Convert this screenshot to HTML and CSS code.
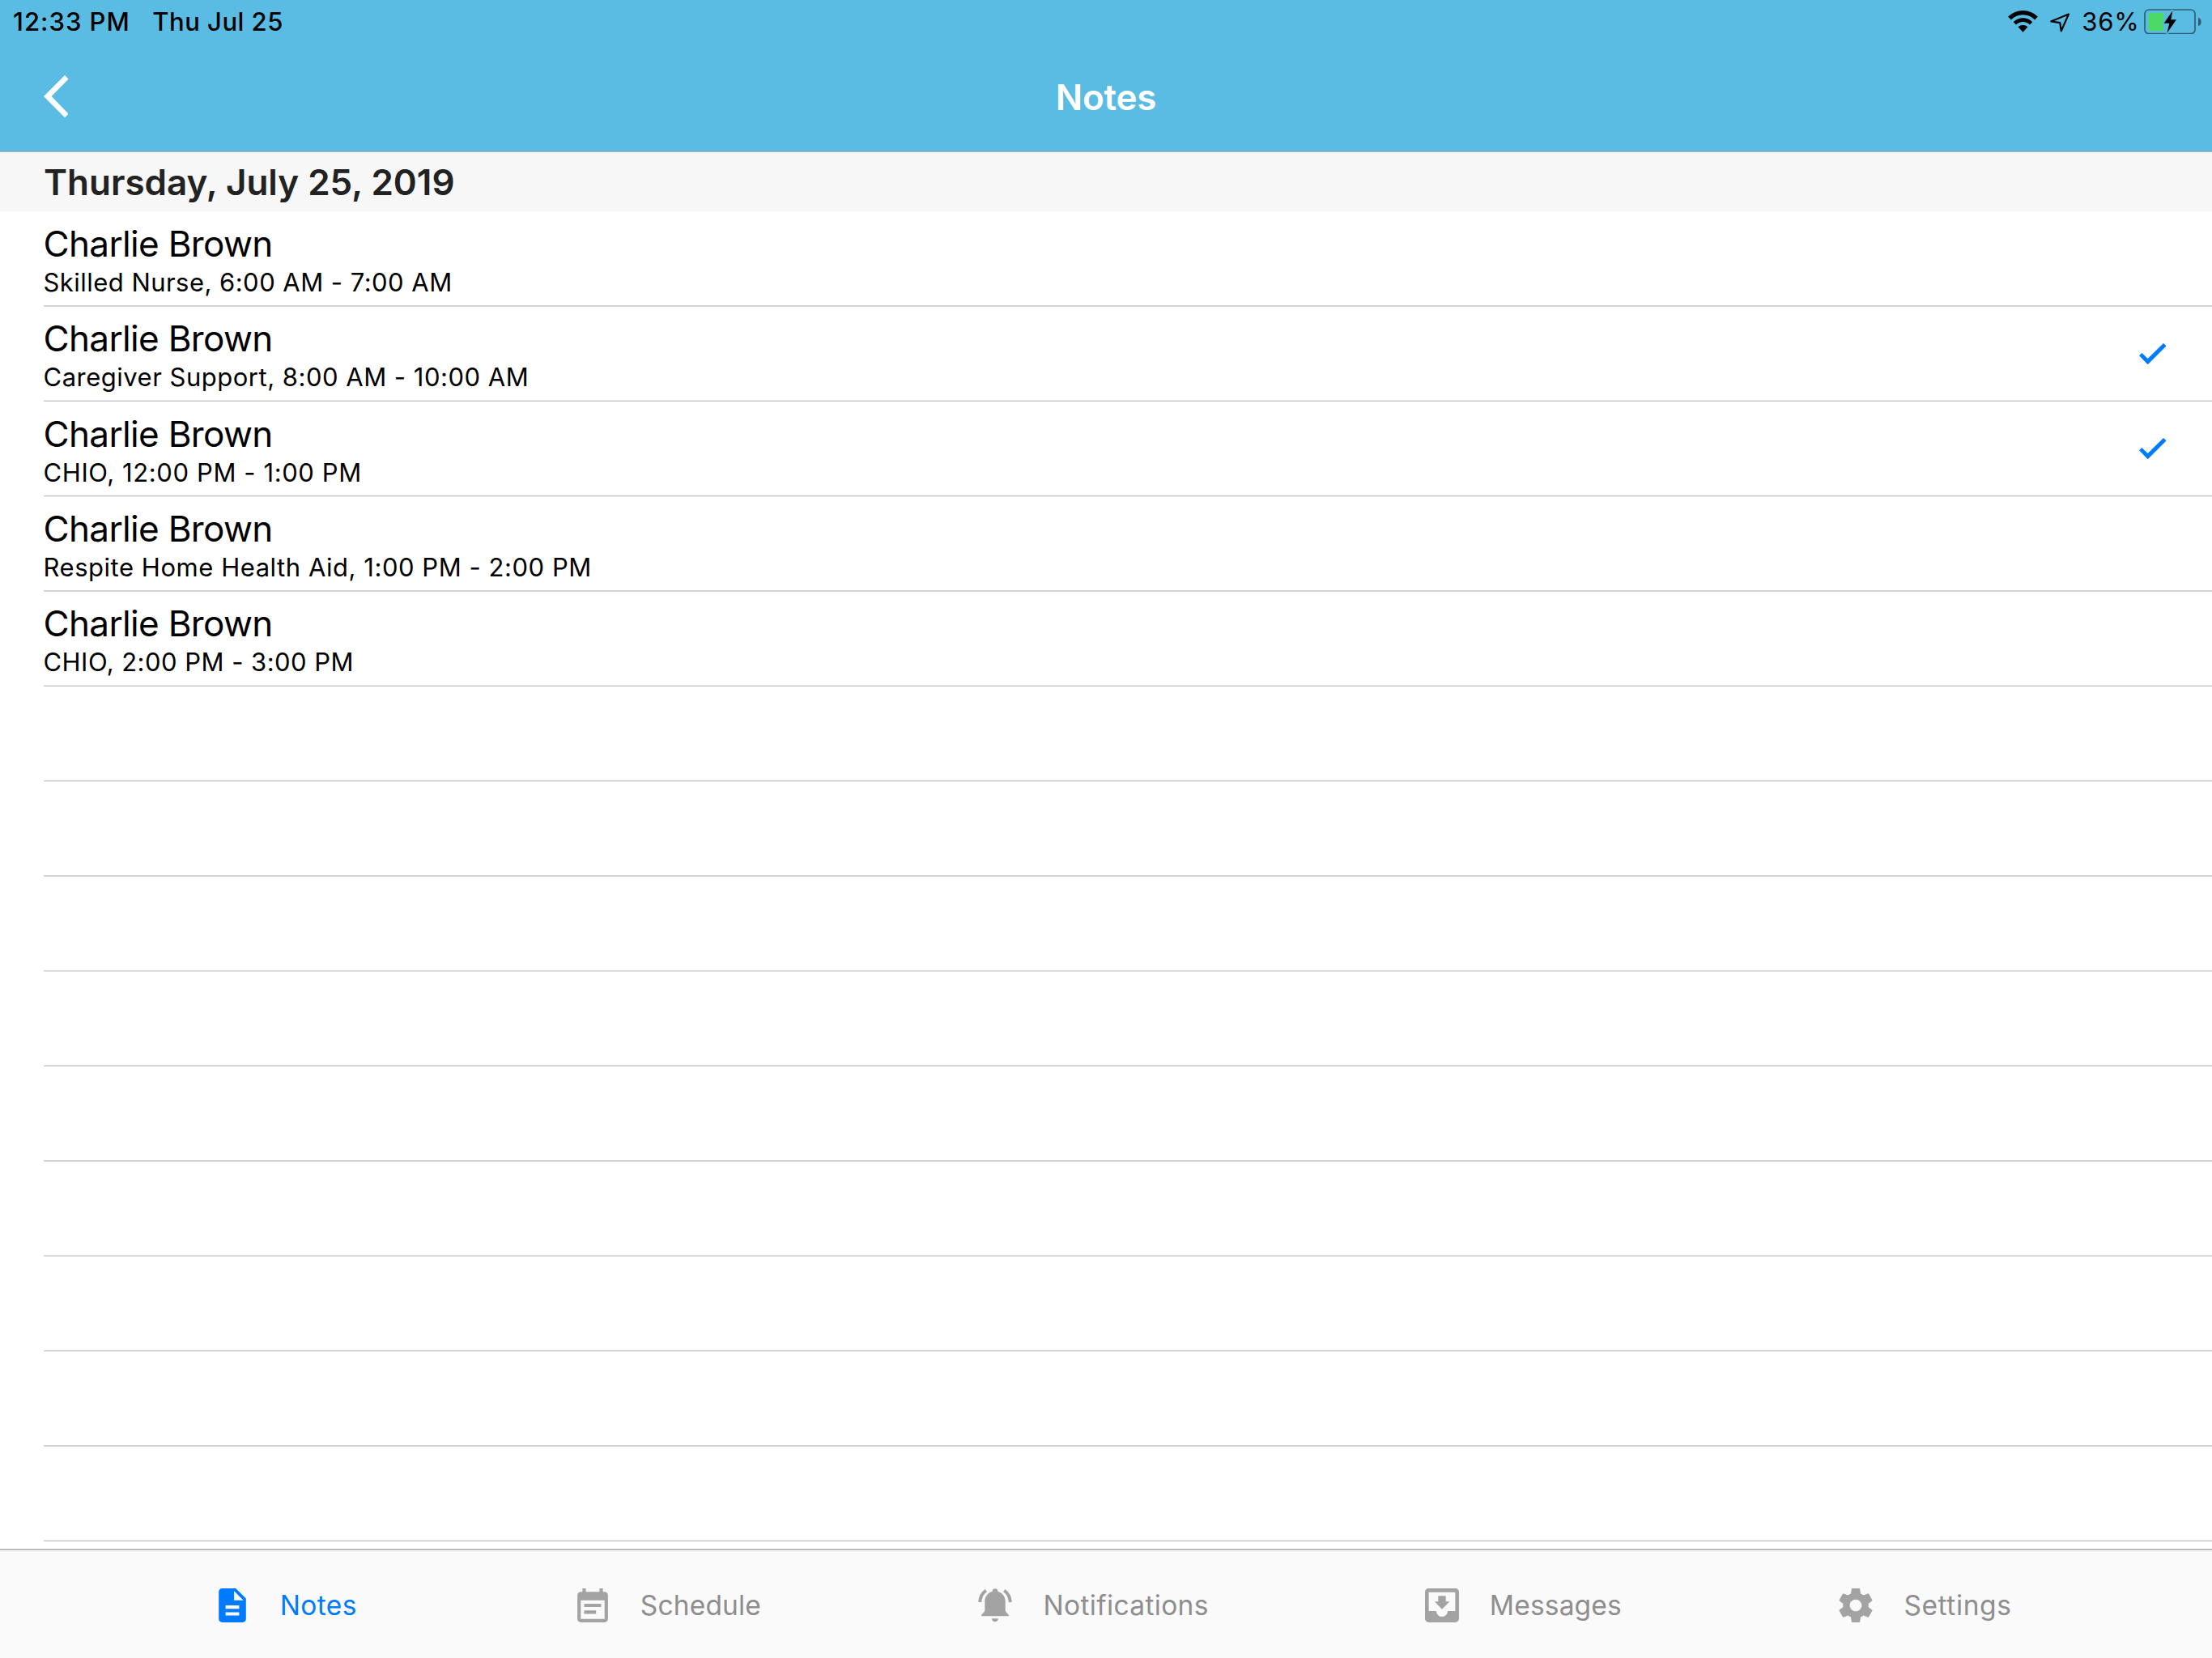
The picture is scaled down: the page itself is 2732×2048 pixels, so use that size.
FILE: index.html
```html
<!DOCTYPE html>
<html lang="en">
<head>
<meta charset="utf-8">
<title>Notes</title>
<link rel="stylesheet" href="styles.css">
</head>
<body>
<div class="app">
  <header class="header">
    <div class="status">
      <span class="status-time">12:33 PM</span>
      <span class="status-date">Thu Jul 25</span>
      <div class="status-right">
        <svg class="wifi" viewBox="12 27 111 80" fill="none" stroke="#000">
          <path d="M18 55.5a70 70 0 0 1 99 0" stroke-width="16"/>
          <path d="M37.1 74.6a43 43 0 0 1 60.8 0" stroke-width="14"/>
          <path d="M67.5 107L49.5 88a26 26 0 0 1 36 0z" fill="#000" stroke="none"/>
        </svg>
        <svg class="location" viewBox="168 36 73 72" fill="none" stroke="#000" stroke-width="6.5" stroke-linejoin="round">
          <path d="M172 67L236.500 40.500L209 103L204.500 72.500z"/>
        </svg>
        <span class="battery-label">36%</span>
        <svg class="battery" viewBox="18 20 213 95">
          <rect x="21" y="23" width="186" height="89" rx="15" fill="none" stroke="#000" stroke-opacity=".5" stroke-width="5"/>
          <path d="M219 52c7 2 11 8 11 16s-4 14-11 16z" fill="#000" fill-opacity=".5"/>
          <rect x="34" y="35" width="57" height="66" rx="7" fill="#4cd964"/>
          <path class="bolt-gap" d="M124 25L91 73h19l-8 38 37-51h-20z"/>
          <path d="M124 27L92 73h20l-9 37 35-50h-20z"/>
        </svg>
      </div>
    </div>
    <div class="navbar">
      <svg class="back" viewBox="0 0 30.6 52.3" fill="#fff"><path d="M26 0L30.600 4.600L9.600 26.100L30.600 47.700L26 52.300L0 26.100z"/></svg>
      <h1 class="title">Notes</h1>
    </div>
  </header>
  <main class="content">
    <h2 class="section">Thursday, July 25, 2019</h2>
    <ul class="list">
      <li class="row"><div><div class="name">Charlie Brown</div><div class="detail nurse">Skilled Nurse, 6:00 AM - 7:00 AM</div></div></li>
      <li class="row"><div><div class="name">Charlie Brown</div><div class="detail">Caregiver Support, 8:00 AM - 10:00 AM</div></div><svg class="check" viewBox="0 0 101 79"><path d="M0 46L10 36L32 57L90 0L101 10L32 79z"/></svg></li>
      <li class="row"><div><div class="name">Charlie Brown</div><div class="detail chio">CHIO, 12:00 PM - 1:00 PM</div></div><svg class="check" viewBox="0 0 101 79"><path d="M0 46L10 36L32 57L90 0L101 10L32 79z"/></svg></li>
      <li class="row"><div><div class="name">Charlie Brown</div><div class="detail respite">Respite Home Health Aid, 1:00 PM - 2:00 PM</div></div></li>
      <li class="row"><div><div class="name">Charlie Brown</div><div class="detail nurse">CHIO, 2:00 PM - 3:00 PM</div></div></li>
      <li class="row"></li>
      <li class="row"></li>
      <li class="row"></li>
      <li class="row"></li>
      <li class="row"></li>
      <li class="row"></li>
      <li class="row"></li>
      <li class="row"></li>
      <li class="row"></li>
    </ul>
  </main>
  <nav class="tabs">
    <a class="tab active">
      <svg class="icon" viewBox="2 2 20 20"><path d="M14 2H6c-1.100 0-1.990.9-1.990 2L4 20c0 1.100.89 2 1.990 2H18c1.100 0 2-.9 2-2V8l-6-6zm2 16H8v-2h8v2zm0-4H8v-2h8v2zm-3-5V3.500L18.500 9H13z"/></svg>
      <span class="label-notes">Notes</span>
    </a>
    <a class="tab schedule">
      <svg class="icon" viewBox="2 1 20 20"><path d="M17 10H7v2h10v-2zm2-7h-1V1h-2v2H8V1H6v2H5c-1.110 0-1.990.9-1.990 2L3 19c0 1.100.89 2 2 2h14c1.100 0 2-.9 2-2V5c0-1.100-.9-2-2-2zm0 16H5V8h14v11zm-5-5H7v2h7v-2z"/></svg>
      <span class="label-schedule">Schedule</span>
    </a>
    <a class="tab">
      <svg class="icon" viewBox="27 36 126 126">
        <path d="M90 37c5.500 0 10 4 10 9v1c17 4 28 19 28 37v32c0 4 2 7 5 10l8 9q2 4-3 4H42q-5 0-3-4l8-9c3-3 5-6 5-10V84c0-18 11-33 28-37v-1c0-5 4.500-9 10-9z"/>
        <path d="M78 148h24c0 7-5 12-12 12s-12-5-12-12z"/>
        <path d="M33.500 87C35 69 42 54 56.500 44M146.500 87C145 69 138 54 123.500 44" fill="none" stroke="currentColor" stroke-width="12"/>
      </svg>
      <span class="label-notifications">Notifications</span>
    </a>
    <a class="tab messages">
      <svg class="icon" viewBox="3 3 18 18"><path d="M19 3H4.990C3.880 3 3.010 3.900 3.010 5L3 19c0 1.100.88 2 1.990 2H19c1.100 0 2-.9 2-2V5c0-1.100-.9-2-2-2zm0 12h-4c0 1.660-1.350 3-3 3s-3-1.340-3-3H4.990V5H19v10zm-3-5h-2V7h-4v3H8l4 4 4-4z"/></svg>
      <span class="label-messages">Messages</span>
    </a>
    <a class="tab">
      <svg class="icon" viewBox="2 2 20 20"><path d="M19.430 12.980c.04-.32.07-.64.07-.98s-.03-.66-.07-.98l2.110-1.650c.19-.15.24-.42.12-.64l-2-3.460c-.12-.22-.39-.3-.61-.22l-2.490 1c-.52-.4-1.080-.73-1.690-.98l-.38-2.650C14.460 2.180 14.250 2 14 2h-4c-.25 0-.46.18-.49.42l-.38 2.650c-.61.25-1.170.59-1.690.98l-2.490-1c-.23-.09-.49 0-.61.22l-2 3.460c-.13.22-.07.49.12.64l2.110 1.650c-.04.32-.07.65-.07.98s.03.66.07.98l-2.110 1.650c-.19.15-.24.42-.12.64l2 3.460c.12.22.39.3.61.22l2.490-1c.52.4 1.080.73 1.690.98l.38 2.650c.03.24.24.42.49.42h4c.25 0 .46-.18.49-.42l.38-2.650c.61-.25 1.170-.59 1.690-.98l2.490 1c.23.09.49 0 .61-.22l2-3.460c.12-.22.07-.49-.12-.64l-2.110-1.650zM12 15.500c-1.930 0-3.500-1.570-3.500-3.500s1.570-3.500 3.500-3.500 3.500 1.570 3.500 3.500-1.570 3.500-3.500 3.500z"/></svg>
      <span class="label-settings">Settings</span>
    </a>
  </nav>
</div>
</body>
</html>
```
FILE: styles.css
```css
* { box-sizing: border-box; }
html, body { margin: 0; height: 100%; }
body { font-family: Inter, "Liberation Sans", sans-serif; color: #000; background: #fff; overflow: hidden; }
h1, h2, ul { margin: 0; padding: 0; font-weight: 600; }
svg { display: block; flex: none; }

.app { height: 2048px; display: flex; flex-direction: column; }

.header { flex: none; height: 188px; background: #5abbe3; border-bottom: 1px solid #b7b3b9; display: flex; flex-direction: column; }

.status { height: 53px; padding: 0 13px 0 16px; display: flex; align-items: center; font-size: 31px; line-height: 52px; font-weight: 500; }
.status-time { letter-spacing: 1.02px; }
.status-date { letter-spacing: .48px; margin-left: 27.500px; }
.status-right { margin-left: auto; display: flex; align-items: center; }
.wifi { width: 37px; height: 26.700px; margin-right: 15px; }
.location { width: 24.500px; height: 24px; margin: 2px 15px 0 0; }
.battery-label { letter-spacing: .8px; font-weight: 400; margin-right: 5.500px; }
.battery { width: 71px; height: 31.700px; }
.bolt-gap { fill: #5abbe3; stroke: #5abbe3; stroke-width: 10px; }

.navbar { flex: 1; display: grid; grid-template-columns: 1fr auto 1fr; align-items: center; padding: 0 53.500px 2px; }
.back { width: 30.600px; height: 52.300px; }
.title { padding-top: 2px; font-size: 44px; line-height: 60px; letter-spacing: -.18px; color: #fff; }

.content { flex: 1; min-height: 0; overflow: hidden; }
.section { height: 73px; padding-left: 54px; background: #f7f7f7; color: #222; font-size: 44px; line-height: 74px; letter-spacing: 0; }

.list { list-style: none; padding-left: 53.500px; }
.row { height: 117px; display: flex; justify-content: space-between; padding-right: 56.700px; font-weight: 400; }
.row:first-child, .row:nth-child(3n) { height: 118px; }
.row:nth-child(3n+1) { border-bottom: 1px solid #d2d1d6; box-shadow: inset 0 -1px #d2d1d6; }
.row:nth-child(3n+2) { border-bottom: 1px solid #c2c1c6; box-shadow: inset 0 -1px #ededef; }
.row:nth-child(3n) { border-bottom: 1px solid #ededef; box-shadow: inset 0 -1px #c2c1c6; }
.name { padding-top: 14px; font-size: 44px; line-height: 53px; letter-spacing: -.66px; }
.row:nth-child(3n+2) .name, .row:nth-child(4) .name { padding-top: 13px; }
.detail { font-size: 31px; line-height: 41px; letter-spacing: .5px; }
.detail.nurse { letter-spacing: .46px; }
.detail.chio { letter-spacing: .6px; }
.detail.respite { letter-spacing: .54px; }
.check { width: 33.700px; height: 26.300px; margin-top: 45px; fill: #007aff; }

.tabs { flex: none; height: 135px; border-top: 2px solid #bcbcbc; background: #fafafa; display: flex; align-items: center; gap: 268.500px; padding: 2px 0 0 265.700px; }
.tab { display: flex; align-items: center; gap: 38px; font-size: 33.500px; line-height: 44px; color: #8e8e8e; }
.tab.schedule { margin-left: 1.500px; }
.tab.messages { margin-left: -1.500px; }
.icon { width: 42px; height: 42px; color: #a3a3a3; fill: currentColor; }
.tab.active, .tab.active .icon { color: #007aff; }
.label-notes { letter-spacing: .4px; }
.label-schedule { letter-spacing: .14px; }
.label-notifications { letter-spacing: .35px; }
.label-messages { letter-spacing: .17px; }
.label-settings { letter-spacing: .6px; }
```
